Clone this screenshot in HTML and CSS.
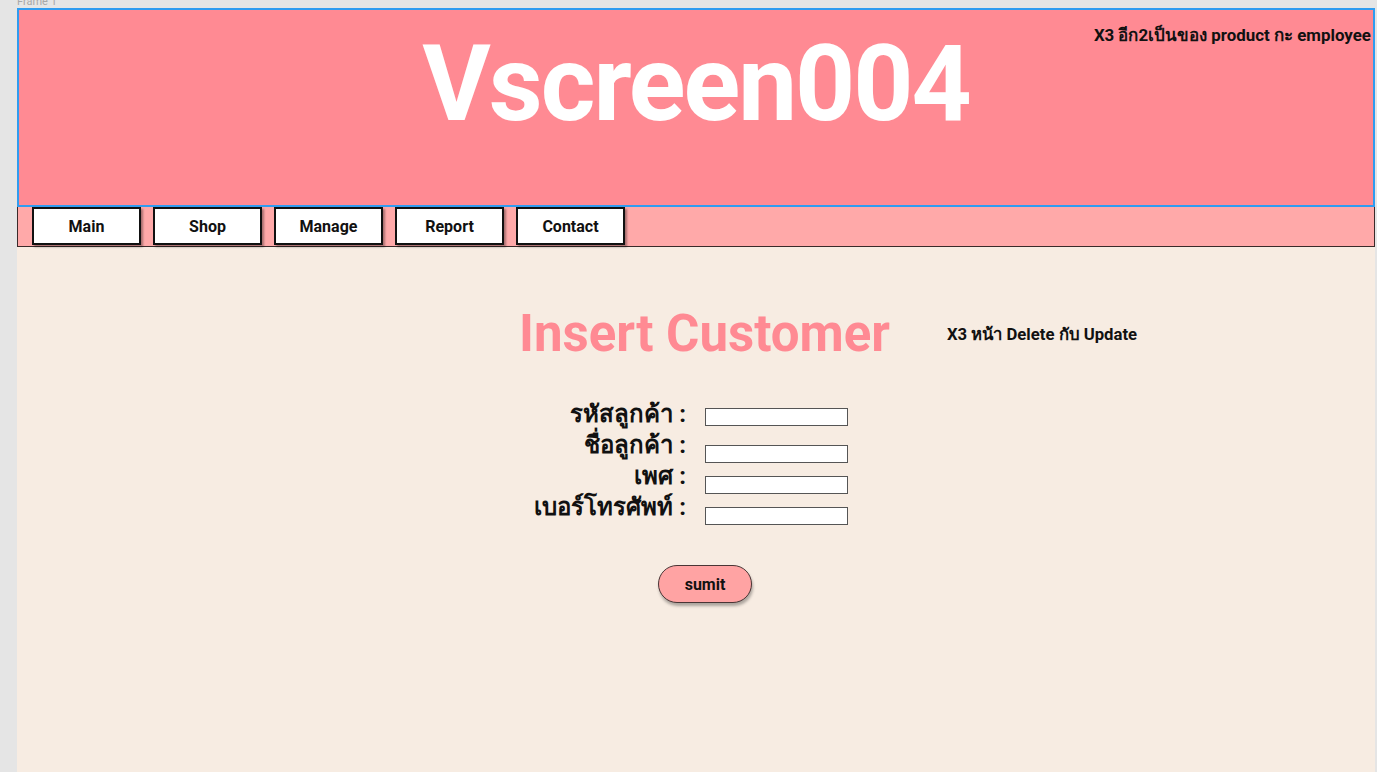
FILE: index.html
```html
<!DOCTYPE html>
<html>
<head>
  <title>Vscreen004</title>
  <link rel="stylesheet" href="styles.css">
</head>
<body>
  <div class="frame-label">Frame 1</div>

  <div class="frame">
    <div class="header">
      <h1 class="logo">Vscreen004</h1>
      <div class="header-note">X3 อีก2เป็นของ product กะ employee</div>
    </div>

    <div class="nav">
      <a class="nav-btn" href="#">Main</a>
      <a class="nav-btn" href="#">Shop</a>
      <a class="nav-btn" href="#">Manage</a>
      <a class="nav-btn" href="#">Report</a>
      <a class="nav-btn" href="#">Contact</a>
    </div>

    <div class="content">
      <div class="title-row">
        <h2 class="page-title">Insert Customer</h2>
        <div class="title-note">X3 หน้า Delete กับ Update</div>
      </div>

      <form class="customer-form">
        <label class="form-label" for="cus-id">รหัสลูกค้า :</label>
        <input class="form-input first" type="text" id="cus-id" name="cus-id">

        <label class="form-label" for="cus-name">ชื่อลูกค้า :</label>
        <input class="form-input" type="text" id="cus-name" name="cus-name">

        <label class="form-label" for="cus-sex">เพศ :</label>
        <input class="form-input" type="text" id="cus-sex" name="cus-sex">

        <label class="form-label" for="cus-tel">เบอร์โทรศัพท์ :</label>
        <input class="form-input" type="text" id="cus-tel" name="cus-tel">

        <div class="form-actions">
          <button type="submit" class="submit-btn">sumit</button>
        </div>
      </form>
    </div>
  </div>
</body>
</html>
```

FILE: styles.css
```css
/* canvas */

body {
  margin: 0;
  background-color: #e5e5e5;
  font-family: Roboto, "Noto Sans", sans-serif;
  overflow: hidden;
}

.frame-label {
  height: 8px;
  padding-left: 17px;
  font-size: 11px;
  line-height: 4px;
  color: #a8a8a8;
  overflow: hidden;
}

.frame {
  width: 1358px;
  margin-left: 17px;
}

/* header */

.header {
  position: relative;
  height: 195px;
  background-color: #ff8a93;
  border: 2px solid #2f9cf0;
  text-align: center;
}

.logo {
  margin: 0;
  padding-top: 22px;
  font-size: 105px;
  line-height: 105px;
  font-weight: 700;
  color: #fff;
  letter-spacing: -2px;
}

.header-note {
  position: absolute;
  top: 12px;
  right: 2px;
  font-size: 16.9px;
  font-weight: 700;
  color: #111;
}

/* nav */

.nav {
  display: flex;
  gap: 12px;
  height: 40px;
  padding-left: 14px;
  background-color: #ffa9a9;
  border: 1px solid #3a2a2a;
  border-top: none;
  box-sizing: border-box;
}

.nav-btn {
  display: flex;
  align-items: center;
  justify-content: center;
  width: 109px;
  height: 38px;
  box-sizing: border-box;
  background-color: #fff;
  border: 2px solid #111;
  box-shadow: 2px 2px 2px rgba(0, 0, 0, 0.35);
  color: #111;
  font-size: 16px;
  font-weight: 700;
  text-decoration: none;
}

/* content */

.content {
  height: 526px;
  background-color: #f7ece2;
  padding-top: 55px;
  box-sizing: border-box;
}

.title-row {
  display: flex;
  align-items: center;
  padding-left: 502px;
  gap: 57px;
}

.page-title {
  margin: 0;
  font-size: 51px;
  font-weight: 700;
  color: #ff8a93;
  line-height: 64px;
}

.title-note {
  font-size: 16.7px;
  font-weight: 700;
  color: #111;
  margin-top: 0;
}

.customer-form {
  display: grid;
  grid-template-columns: 669px 143px;
  grid-auto-rows: 31px;
  column-gap: 19px;
  margin-top: 33px;
}

.form-label {
  text-align: right;
  font-size: 24px;
  font-weight: 700;
  color: #111;
  line-height: 31px;
}

.form-input {
  align-self: end;
  width: 143px;
  height: 18px;
  margin: 0 0 -2px;
  padding: 0 3px;
  box-sizing: border-box;
  border: 1px solid #555;
  background-color: #fff;
  font-size: 12px;
}

.form-input.first {
  margin-bottom: 4px;
}

.form-actions {
  grid-column: 1 / 3;
  padding-left: 641px;
  padding-top: 42px;
}

.submit-btn {
  width: 94px;
  height: 38px;
  background-color: #ffa3a3;
  border: 1px solid #4a3535;
  border-radius: 19px;
  box-shadow: 1px 3px 3px rgba(0, 0, 0, 0.3);
  font-family: Roboto, sans-serif;
  font-size: 16px;
  font-weight: 700;
  color: #111;
  cursor: pointer;
}
```
